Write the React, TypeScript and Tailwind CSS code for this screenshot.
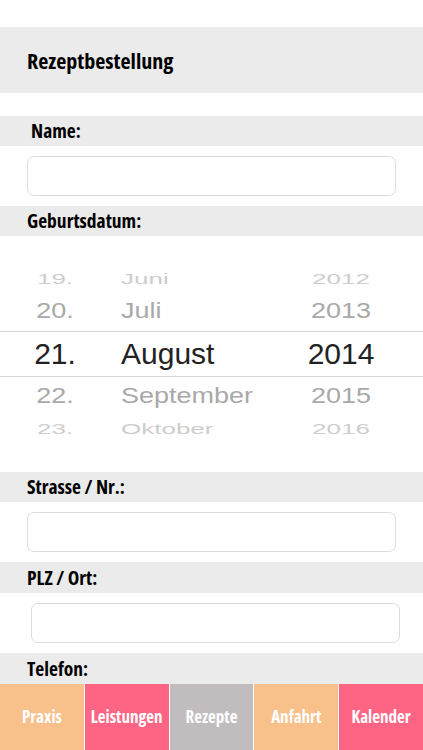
const label = "font-['Open_Sans'] font-bold [font-stretch:75%] text-black";

function Band({ text, indent = "pl-[27px]", h = "h-[30px]" }: { text: string; indent?: string; h?: string }) {
  return (
    <div className={`${h} bg-[#ebebeb] flex items-center ${indent}`}>
      <span className={`${label} text-[19.5px] leading-none`}>{text}</span>
    </div>
  );
}

function Field({ className = "mx-[27px]" }: { className?: string }) {
  return (
    <div className={`h-[40px] rounded-[7px] border border-[#dcdcdc] bg-white ${className}`} />
  );
}

type Row = { day: string; month: string; year: string; kind: "far" | "near" | "sel" };

const rows: Row[] = [
  { day: "19.", month: "Juni", year: "2012", kind: "far" },
  { day: "20.", month: "Juli", year: "2013", kind: "near" },
  { day: "21.", month: "August", year: "2014", kind: "sel" },
  { day: "22.", month: "September", year: "2015", kind: "near" },
  { day: "23.", month: "Oktober", year: "2016", kind: "far" },
];

function PickerRow({ row }: { row: Row }) {
  const box =
    row.kind === "sel"
      ? "h-[46px] border-y border-[#d6d6d6] text-[30px] text-[#222]"
      : row.kind === "near"
        ? "h-[39px] text-[27px] text-[#a9a9a9] [transform:scaleY(0.82)]"
        : "h-[26px] text-[26px] text-[#cdcdcd] [transform:scaleY(0.58)]";
  return (
    <div className={`flex items-center pl-[20px] font-['Liberation_Sans'] leading-none ${box}`}>
      <span className="w-[70px] text-center">{row.day}</span>
      <span className="ml-[31px] w-[179px]">{row.month}</span>
      <span className="w-[82px] text-center">{row.year}</span>
    </div>
  );
}

export default function App() {
  return (
    <div className="w-[423px] h-[750px] bg-white flex flex-col overflow-hidden">
      <div className="h-[27px] shrink-0" />
      <div className="h-[66px] shrink-0 bg-[#ebebeb] flex items-center pl-[27px]">
        <h1 className={`${label} text-[22px] leading-none`}>Rezeptbestellung</h1>
      </div>
      <div className="h-[23px] shrink-0" />
      <Band text="Name:" indent="pl-[31px]" />
      <div className="h-[10px] shrink-0" />
      <Field />
      <div className="h-[10px] shrink-0" />
      <Band text="Geburtsdatum:" />

      <div className="h-[236px] shrink-0 flex flex-col pt-[30px]">
        {rows.map((r) => (
          <PickerRow key={r.day} row={r} />
        ))}
      </div>

      <Band text="Strasse / Nr.:" />
      <div className="h-[10px] shrink-0" />
      <Field />
      <div className="h-[10px] shrink-0" />
      <Band text="PLZ / Ort:" h="h-[31px]" />
      <div className="h-[10px] shrink-0" />
      <Field className="ml-[31px] mr-[23px]" />
      <div className="h-[10px] shrink-0" />
      <Band text="Telefon:" h="h-[31px]" />

      <nav className="h-[66px] shrink-0 flex gap-[1px] bg-white">
        {[
          { t: "Praxis", c: "bg-[#f8c08b]" },
          { t: "Leistungen", c: "bg-[#fe6483]" },
          { t: "Rezepte", c: "bg-[#c1bdbf]" },
          { t: "Anfahrt", c: "bg-[#f8c08b]" },
          { t: "Kalender", c: "bg-[#fe6483]" },
        ].map((tab) => (
          <div key={tab.t} className={`flex-1 flex items-center justify-center ${tab.c}`}>
            <span className="font-['Open_Sans'] font-bold [font-stretch:75%] text-[17px] text-white">
              {tab.t}
            </span>
          </div>
        ))}
      </nav>
    </div>
  );
}
